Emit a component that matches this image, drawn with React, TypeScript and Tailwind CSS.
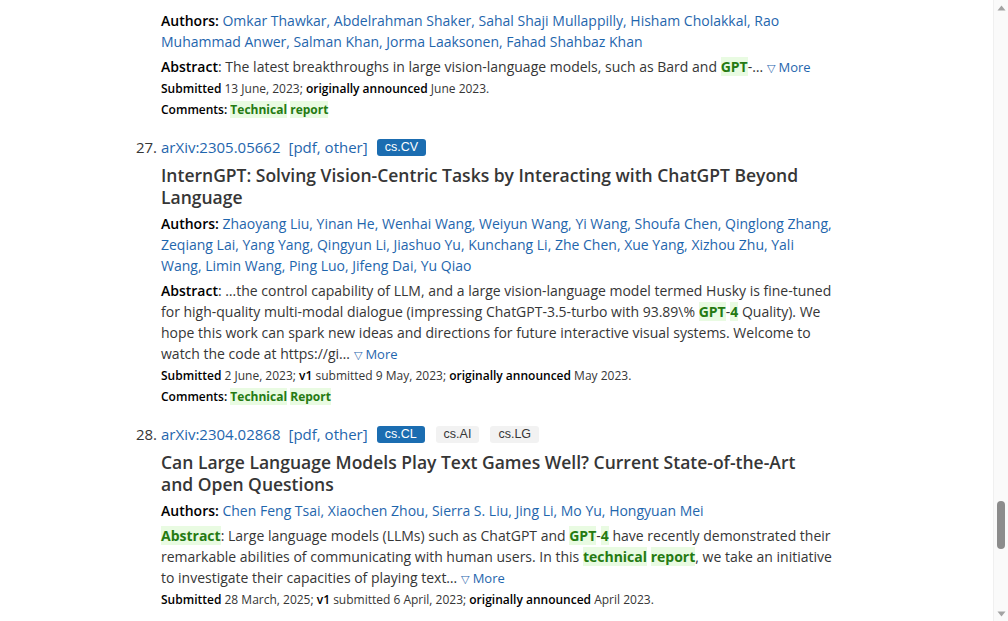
import type { ReactNode } from 'react';

type Paper = {
  num?: number;
  id?: string;
  tags?: { label: string; primary?: boolean }[];
  title: string;
  authors: string[];
  abstract: ReactNode;
  submitted: ReactNode;
  comments?: ReactNode;
};

function Hit({ children }: { children: ReactNode }) {
  return <span className="bg-[#e9fbe2] font-bold text-[#257a12]">{children}</span>;
}

function More() {
  return (
    <a className="text-[13px] text-[#1f66ad] ml-1 cursor-pointer">
      <span className="text-[11px]">▽</span> More
    </a>
  );
}

const papers: Paper[] = [
  {
    title: 'Models',
    authors: [
      'Omkar Thawkar',
      'Abdelrahman Shaker',
      'Sahal Shaji Mullappilly',
      'Hisham Cholakkal',
      'Rao Muhammad Anwer',
      'Salman Khan',
      'Jorma Laaksonen',
      'Fahad Shahbaz Khan',
    ],
    abstract: (
      <>
        <span className="font-semibold text-black">Abstract</span>: The latest breakthroughs in large vision-language models, such as Bard and <Hit>GPT</Hit>-&hellip;
        <More />
      </>
    ),
    submitted: (
      <>
        <span className="font-semibold text-black">Submitted</span> 13 June, 2023; <span className="font-semibold text-black">originally announced</span> June 2023.
      </>
    ),
    comments: (
      <>
        <Hit>Technical</Hit> <Hit>report</Hit>
      </>
    ),
  },
  {
    num: 27,
    id: '2305.05662',
    tags: [{ label: 'cs.CV', primary: true }],
    title: 'InternGPT: Solving Vision-Centric Tasks by Interacting with ChatGPT Beyond Language',
    authors: [
      'Zhaoyang Liu',
      'Yinan He',
      'Wenhai Wang',
      'Weiyun Wang',
      'Yi Wang',
      'Shoufa Chen',
      'Qinglong Zhang',
      'Zeqiang Lai',
      'Yang Yang',
      'Qingyun Li',
      'Jiashuo Yu',
      'Kunchang Li',
      'Zhe Chen',
      'Xue Yang',
      'Xizhou Zhu',
      'Yali Wang',
      'Limin Wang',
      'Ping Luo',
      'Jifeng Dai',
      'Yu Qiao',
    ],
    abstract: (
      <>
        <span className="font-semibold text-black">Abstract</span>: &hellip;the control capability of LLM, and a large vision-language model termed Husky is fine-tuned for high-quality multi-modal dialogue (impressing ChatGPT-3.5-turbo with 93.89\% <Hit>GPT</Hit>-<Hit>4</Hit> Quality). We hope this work can spark new ideas and directions for future interactive visual systems. Welcome to watch the code at https://gi&hellip;
        <More />
      </>
    ),
    submitted: (
      <>
        <span className="font-semibold text-black">Submitted</span> 2 June, 2023; <span className="font-semibold text-black">v1</span> submitted 9 May, 2023; <span className="font-semibold text-black">originally announced</span> May 2023.
      </>
    ),
    comments: (
      <>
        <Hit>Technical</Hit> <Hit>Report</Hit>
      </>
    ),
  },
  {
    num: 28,
    id: '2304.02868',
    tags: [{ label: 'cs.CL', primary: true }, { label: 'cs.AI' }, { label: 'cs.LG' }],
    title: 'Can Large Language Models Play Text Games Well? Current State-of-the-Art and\u00a0Open Questions',
    authors: ['Chen Feng Tsai', 'Xiaochen Zhou', 'Sierra S. Liu', 'Jing Li', 'Mo Yu', 'Hongyuan Mei'],
    abstract: (
      <>
        <Hit>Abstract</Hit>: Large language models (LLMs) such as ChatGPT and <Hit>GPT</Hit>-<Hit>4</Hit> have recently demonstrated their remarkable abilities of communicating with human users. In this <Hit>technical</Hit> <Hit>report</Hit>, we take an initiative to investigate their capacities of playing text&hellip;
        <More />
      </>
    ),
    submitted: (
      <>
        <span className="font-semibold text-black">Submitted</span> 28 March, 2025; <span className="font-semibold text-black">v1</span> submitted 6 April, 2023; <span className="font-semibold text-black">originally announced</span> April 2023.
      </>
    ),
  },
];

function Scrollbar() {
  return (
    <div className="w-[15px] h-full bg-[#fafafa] border-l border-[#f0f0f0] flex flex-col items-center">
      <div className="h-[15px] flex items-center justify-center">
        <svg width="9" height="6" viewBox="0 0 9 6">
          <path d="M4.5 0.5 L8.5 5.5 L0.5 5.5 Z" fill="#a3a3a3" />
        </svg>
      </div>
      <div className="flex-1 w-full flex flex-col items-center pt-[486px]">
        <div className="w-[8px] h-[48px] rounded-full bg-[#8c8c8c]" />
      </div>
      <div className="h-[15px] flex items-center justify-center">
        <svg width="9" height="6" viewBox="0 0 9 6">
          <path d="M0.5 0.5 L8.5 0.5 L4.5 5.5 Z" fill="#a3a3a3" />
        </svg>
      </div>
    </div>
  );
}

export default function App() {
  return (
    <div
      className="w-[1008px] h-[621px] overflow-hidden flex bg-white text-[#363636]"
      style={{ fontFamily: '"Open Sans", "Noto Sans", sans-serif' }}
    >
      <div className="flex-1 overflow-hidden">
        <ol className="-mt-[17px] pl-[133px]">
          {papers.map((p, i) => (
            <li key={i} className="flex mb-[16px]">
              <div className="w-[28px] shrink-0 text-right pr-[4px] text-[15px] leading-[22px]">
                {p.num ? `${p.num}.` : ''}
              </div>
              <div className="w-[672px]">
                {p.id && (
                  <div className="flex items-center text-[15px] leading-[22px] mb-[6px]">
                    <a className="text-[#1f66ad]">arXiv:{p.id}</a>
                    <span className="ml-[8px] text-[#1f66ad]">
                      [<a>pdf</a>, <a>other</a>]
                    </span>
                    <div className="flex items-center gap-[11px] ml-[9px]">
                      {p.tags?.map((t) => (
                        <span
                          key={t.label}
                          className={`h-[17px] px-[8px] rounded-[3px] flex items-center text-[12.5px] ${
                            t.primary ? 'bg-[#1b6db1] text-white' : 'bg-[#f2f2f2] text-[#363636]'
                          }`}
                          style={{ fontFamily: '"Liberation Sans", Arial, sans-serif' }}
                        >
                          {t.label}
                        </span>
                      ))}
                    </div>
                  </div>
                )}
                <p
                  className={`text-[17.5px] font-semibold text-[#363636] ${
                    p.id ? 'leading-[22px]' : 'leading-[29px] -mt-[7px]'
                  }`}
                >
                  {p.title}
                </p>
                <p className="mt-[5px] text-[14px] leading-[21px] text-[#1f66ad]">
                  <span className="font-semibold text-black">Authors: </span>
                  {p.authors.map((a, j) => (
                    <span key={a}>
                      <a>{a}</a>
                      {j < p.authors.length - 1 ? ', ' : ''}
                    </span>
                  ))}
                </p>
                <p className="mt-[4px] text-[14px] leading-[21px]">{p.abstract}</p>
                <p className="text-[12px] leading-[21px]">{p.submitted}</p>
                {p.comments && (
                  <p className="text-[12px] leading-[21px]">
                    <span className="font-semibold text-black">Comments: </span>
                    {p.comments}
                  </p>
                )}
              </div>
            </li>
          ))}
        </ol>
      </div>
      <Scrollbar />
    </div>
  );
}
